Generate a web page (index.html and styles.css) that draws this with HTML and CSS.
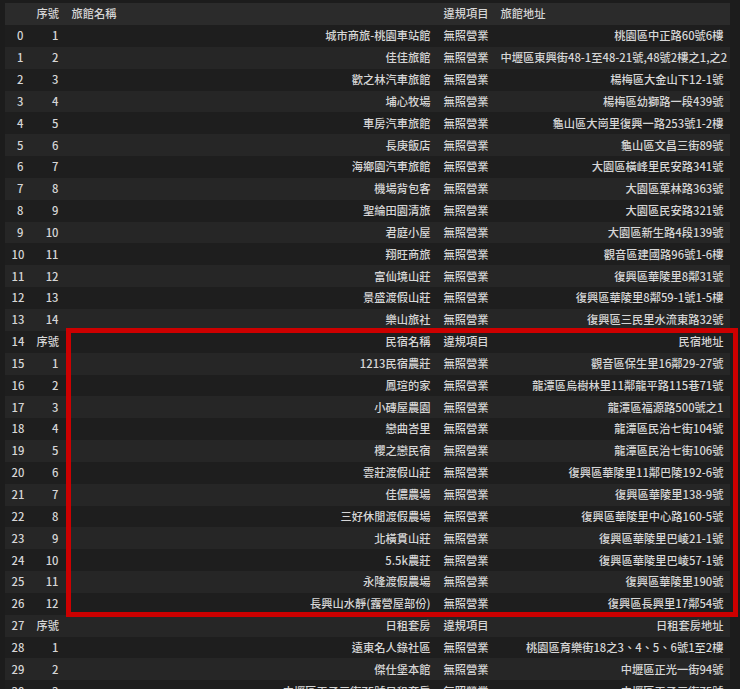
FILE: index.html
```html
<!DOCTYPE html>
<html lang="zh-Hant">
<head>
<meta charset="utf-8">
<title>DataFrame</title>
<link rel="stylesheet" href="styles.css">
</head>
<body>
<div class="wrap">
<table class="df">
<colgroup><col class="c-idx"><col class="c-seq"><col class="c-name"><col class="c-vio"><col class="c-addr"></colgroup>
<thead>
<tr><th></th><th>序號</th><th>旅館名稱</th><th>違規項目</th><th>旅館地址</th></tr>
</thead>
<tbody>
<tr><th>0</th><td>1</td><td>城市商旅-桃園車站館</td><td>無照營業</td><td>桃園區中正路60號6樓</td></tr>
<tr><th>1</th><td>2</td><td>佳佳旅館</td><td>無照營業</td><td>中壢區東興街48-1至48-21號,48號2樓之1,之2</td></tr>
<tr><th>2</th><td>3</td><td>歡之林汽車旅館</td><td>無照營業</td><td>楊梅區大金山下12-1號</td></tr>
<tr><th>3</th><td>4</td><td>埔心牧場</td><td>無照營業</td><td>楊梅區幼獅路一段439號</td></tr>
<tr><th>4</th><td>5</td><td>車房汽車旅館</td><td>無照營業</td><td>龜山區大崗里復興一路253號1-2樓</td></tr>
<tr><th>5</th><td>6</td><td>長庚飯店</td><td>無照營業</td><td>龜山區文昌三街89號</td></tr>
<tr><th>6</th><td>7</td><td>海鄉園汽車旅館</td><td>無照營業</td><td>大園區橫峰里民安路341號</td></tr>
<tr><th>7</th><td>8</td><td>機場背包客</td><td>無照營業</td><td>大園區菓林路363號</td></tr>
<tr><th>8</th><td>9</td><td>聖綸田園清旅</td><td>無照營業</td><td>大園區民安路321號</td></tr>
<tr><th>9</th><td>10</td><td>君庭小屋</td><td>無照營業</td><td>大園區新生路4段139號</td></tr>
<tr><th>10</th><td>11</td><td>翔旺商旅</td><td>無照營業</td><td>觀音區建國路96號1-6樓</td></tr>
<tr><th>11</th><td>12</td><td>富仙境山莊</td><td>無照營業</td><td>復興區華陵里8鄰31號</td></tr>
<tr><th>12</th><td>13</td><td>景盛渡假山莊</td><td>無照營業</td><td>復興區華陵里8鄰59-1號1-5樓</td></tr>
<tr><th>13</th><td>14</td><td>樂山旅社</td><td>無照營業</td><td>復興區三民里水流東路32號</td></tr>
<tr><th>14</th><td>序號</td><td>民宿名稱</td><td>違規項目</td><td>民宿地址</td></tr>
<tr><th>15</th><td>1</td><td>1213民宿農莊</td><td>無照營業</td><td>觀音區保生里16鄰29-27號</td></tr>
<tr><th>16</th><td>2</td><td>鳳瑄的家</td><td>無照營業</td><td>龍潭區烏樹林里11鄰龍平路115巷71號</td></tr>
<tr><th>17</th><td>3</td><td>小磚屋農園</td><td>無照營業</td><td>龍潭區福源路500號之1</td></tr>
<tr><th>18</th><td>4</td><td>戀曲峇里</td><td>無照營業</td><td>龍潭區民治七街104號</td></tr>
<tr><th>19</th><td>5</td><td>櫻之戀民宿</td><td>無照營業</td><td>龍潭區民治七街106號</td></tr>
<tr><th>20</th><td>6</td><td>雲莊渡假山莊</td><td>無照營業</td><td>復興區華陵里11鄰巴陵192-6號</td></tr>
<tr><th>21</th><td>7</td><td>佳儂農場</td><td>無照營業</td><td>復興區華陵里138-9號</td></tr>
<tr><th>22</th><td>8</td><td>三好休閒渡假農場</td><td>無照營業</td><td>復興區華陵里中心路160-5號</td></tr>
<tr><th>23</th><td>9</td><td>北橫貫山莊</td><td>無照營業</td><td>復興區華陵里巴崚21-1號</td></tr>
<tr><th>24</th><td>10</td><td>5.5k農莊</td><td>無照營業</td><td>復興區華陵里巴崚57-1號</td></tr>
<tr><th>25</th><td>11</td><td>永隆渡假農場</td><td>無照營業</td><td>復興區華陵里190號</td></tr>
<tr><th>26</th><td>12</td><td>長興山水靜(露營屋部份)</td><td>無照營業</td><td>復興區長興里17鄰54號</td></tr>
<tr><th>27</th><td>序號</td><td>日租套房</td><td>違規項目</td><td>日租套房地址</td></tr>
<tr><th>28</th><td>1</td><td>遠東名人錄社區</td><td>無照營業</td><td>桃園區育樂街18之3、4、5、6號1至2樓</td></tr>
<tr><th>29</th><td>2</td><td>傑仕堡本館</td><td>無照營業</td><td>中壢區正光一街94號</td></tr>
<tr><th>30</th><td>3</td><td>中壢區天子三街75號日租套房</td><td>無照營業</td><td>中壢區天子三街75號</td></tr>
</tbody>
</table>
<div class="highlight"></div>
</div>
</body>
</html>
```
FILE: styles.css
```css
html, body {
  margin: 0;
  padding: 0;
  background: #1c1c1c;
  overflow: hidden;
}
body {
  font-family: "Noto Sans CJK TC", "Noto Sans", sans-serif;
  font-size: 11.25px;
  color: #d6d6d6;
}
.wrap {
  position: relative;
  padding: 3px 0 0 5px;
}
.df {
  border-collapse: collapse;
  border-spacing: 0;
  table-layout: fixed;
  width: 725px;
}
.c-idx { width: 25px; }
.c-seq { width: 35px; }
.c-name { width: 372px; }
.c-vio { width: 57px; }
.c-addr { width: 236px; }
.df th, .df td {
  padding: 0 6.5px;
  white-space: nowrap;
  font-weight: 500;
  line-height: 1;
}
.df thead tr {
  height: 22px;
  background: #2b2b2b;
}
.df thead th {
  text-align: left;
}
.df tbody tr {
  height: 21.85px;
}
.df tbody tr:nth-child(odd) { background: #1e1e1e; }
.df tbody tr:nth-child(even) { background: #262626; }
.df tbody th, .df tbody td {
  text-align: right;
}
.highlight {
  position: absolute;
  left: 66px;
  top: 328px;
  width: 662px;
  height: 279px;
  border: 5px solid #cc0000;
}
```
